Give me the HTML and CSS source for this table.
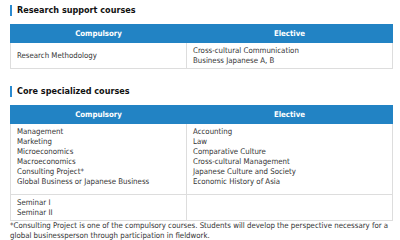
FILE: index.html
```html
<!DOCTYPE html>
<html lang="en">
<head>
<meta charset="utf-8">
<link rel="stylesheet" href="styles.css">
</head>
<body>
<section class="block">
  <h2 class="heading">Research support courses</h2>
  <table class="courses">
    <colgroup><col class="c1"><col class="c2"></colgroup>
    <thead><tr><th>Compulsory</th><th>Elective</th></tr></thead>
    <tbody>
      <tr><td class="mid">Research Methodology</td><td>Cross-cultural Communication<br>Business Japanese A, B</td></tr>
    </tbody>
  </table>
</section>
<section class="block second">
  <h2 class="heading">Core specialized courses</h2>
  <table class="courses">
    <colgroup><col class="c1"><col class="c2"></colgroup>
    <thead><tr><th>Compulsory</th><th>Elective</th></tr></thead>
    <tbody>
      <tr class="tall"><td>Management<br>Marketing<br>Microeconomics<br>Macroeconomics<br>Consulting Project*<br>Global Business or Japanese Business</td><td>Accounting<br>Law<br>Comparative Culture<br>Cross-cultural Management<br>Japanese Culture and Society<br>Economic History of Asia</td></tr>
      <tr><td>Seminar I<br>Seminar II</td><td></td></tr>
    </tbody>
  </table>
  <p class="note">*Consulting Project is one of the compulsory courses. Students will develop the perspective necessary for a global businessperson through participation in fieldwork.</p>
</section>
</body>
</html>
```
FILE: styles.css
```css
html, body { margin: 0; padding: 0; background: #fff; }
body {
  font-family: "DejaVu Sans Condensed", "DejaVu Sans", Verdana, sans-serif;
  color: #333;
  font-size: 7.8px;
  padding: 5px 6px 0 10px;
}
.block { margin: 0; }
.second { margin-top: 17px; }
.heading {
  margin: 0 0 8px 0;
  font-size: 9px;
  font-weight: bold;
  color: #111;
  border-left: 2px solid #2a8ad0;
  padding-left: 5px;
  line-height: 11px;
}
.courses {
  width: 382px;
  border-collapse: collapse;
  table-layout: fixed;
}
.c1 { width: 176px; }
.c2 { width: 206px; }
.courses th {
  background: #2283c4;
  color: #fff;
  font-weight: bold;
  height: 17px;
  padding: 0;
  line-height: 17px;
  border: 1px solid #2283c4;
  border-left: 1px solid #5aa5d8;
}
.courses th:first-child { border-left-color: #2283c4; }
.courses td {
  border: 1px solid #ddd;
  padding: 3px 6px 2px 6px;
  line-height: 10px;
  vertical-align: top;
}
.courses .tall td { padding-bottom: 7px; }
.courses td.mid { vertical-align: middle; }
.note {
  margin: 0;
  line-height: 10px;
}
```
